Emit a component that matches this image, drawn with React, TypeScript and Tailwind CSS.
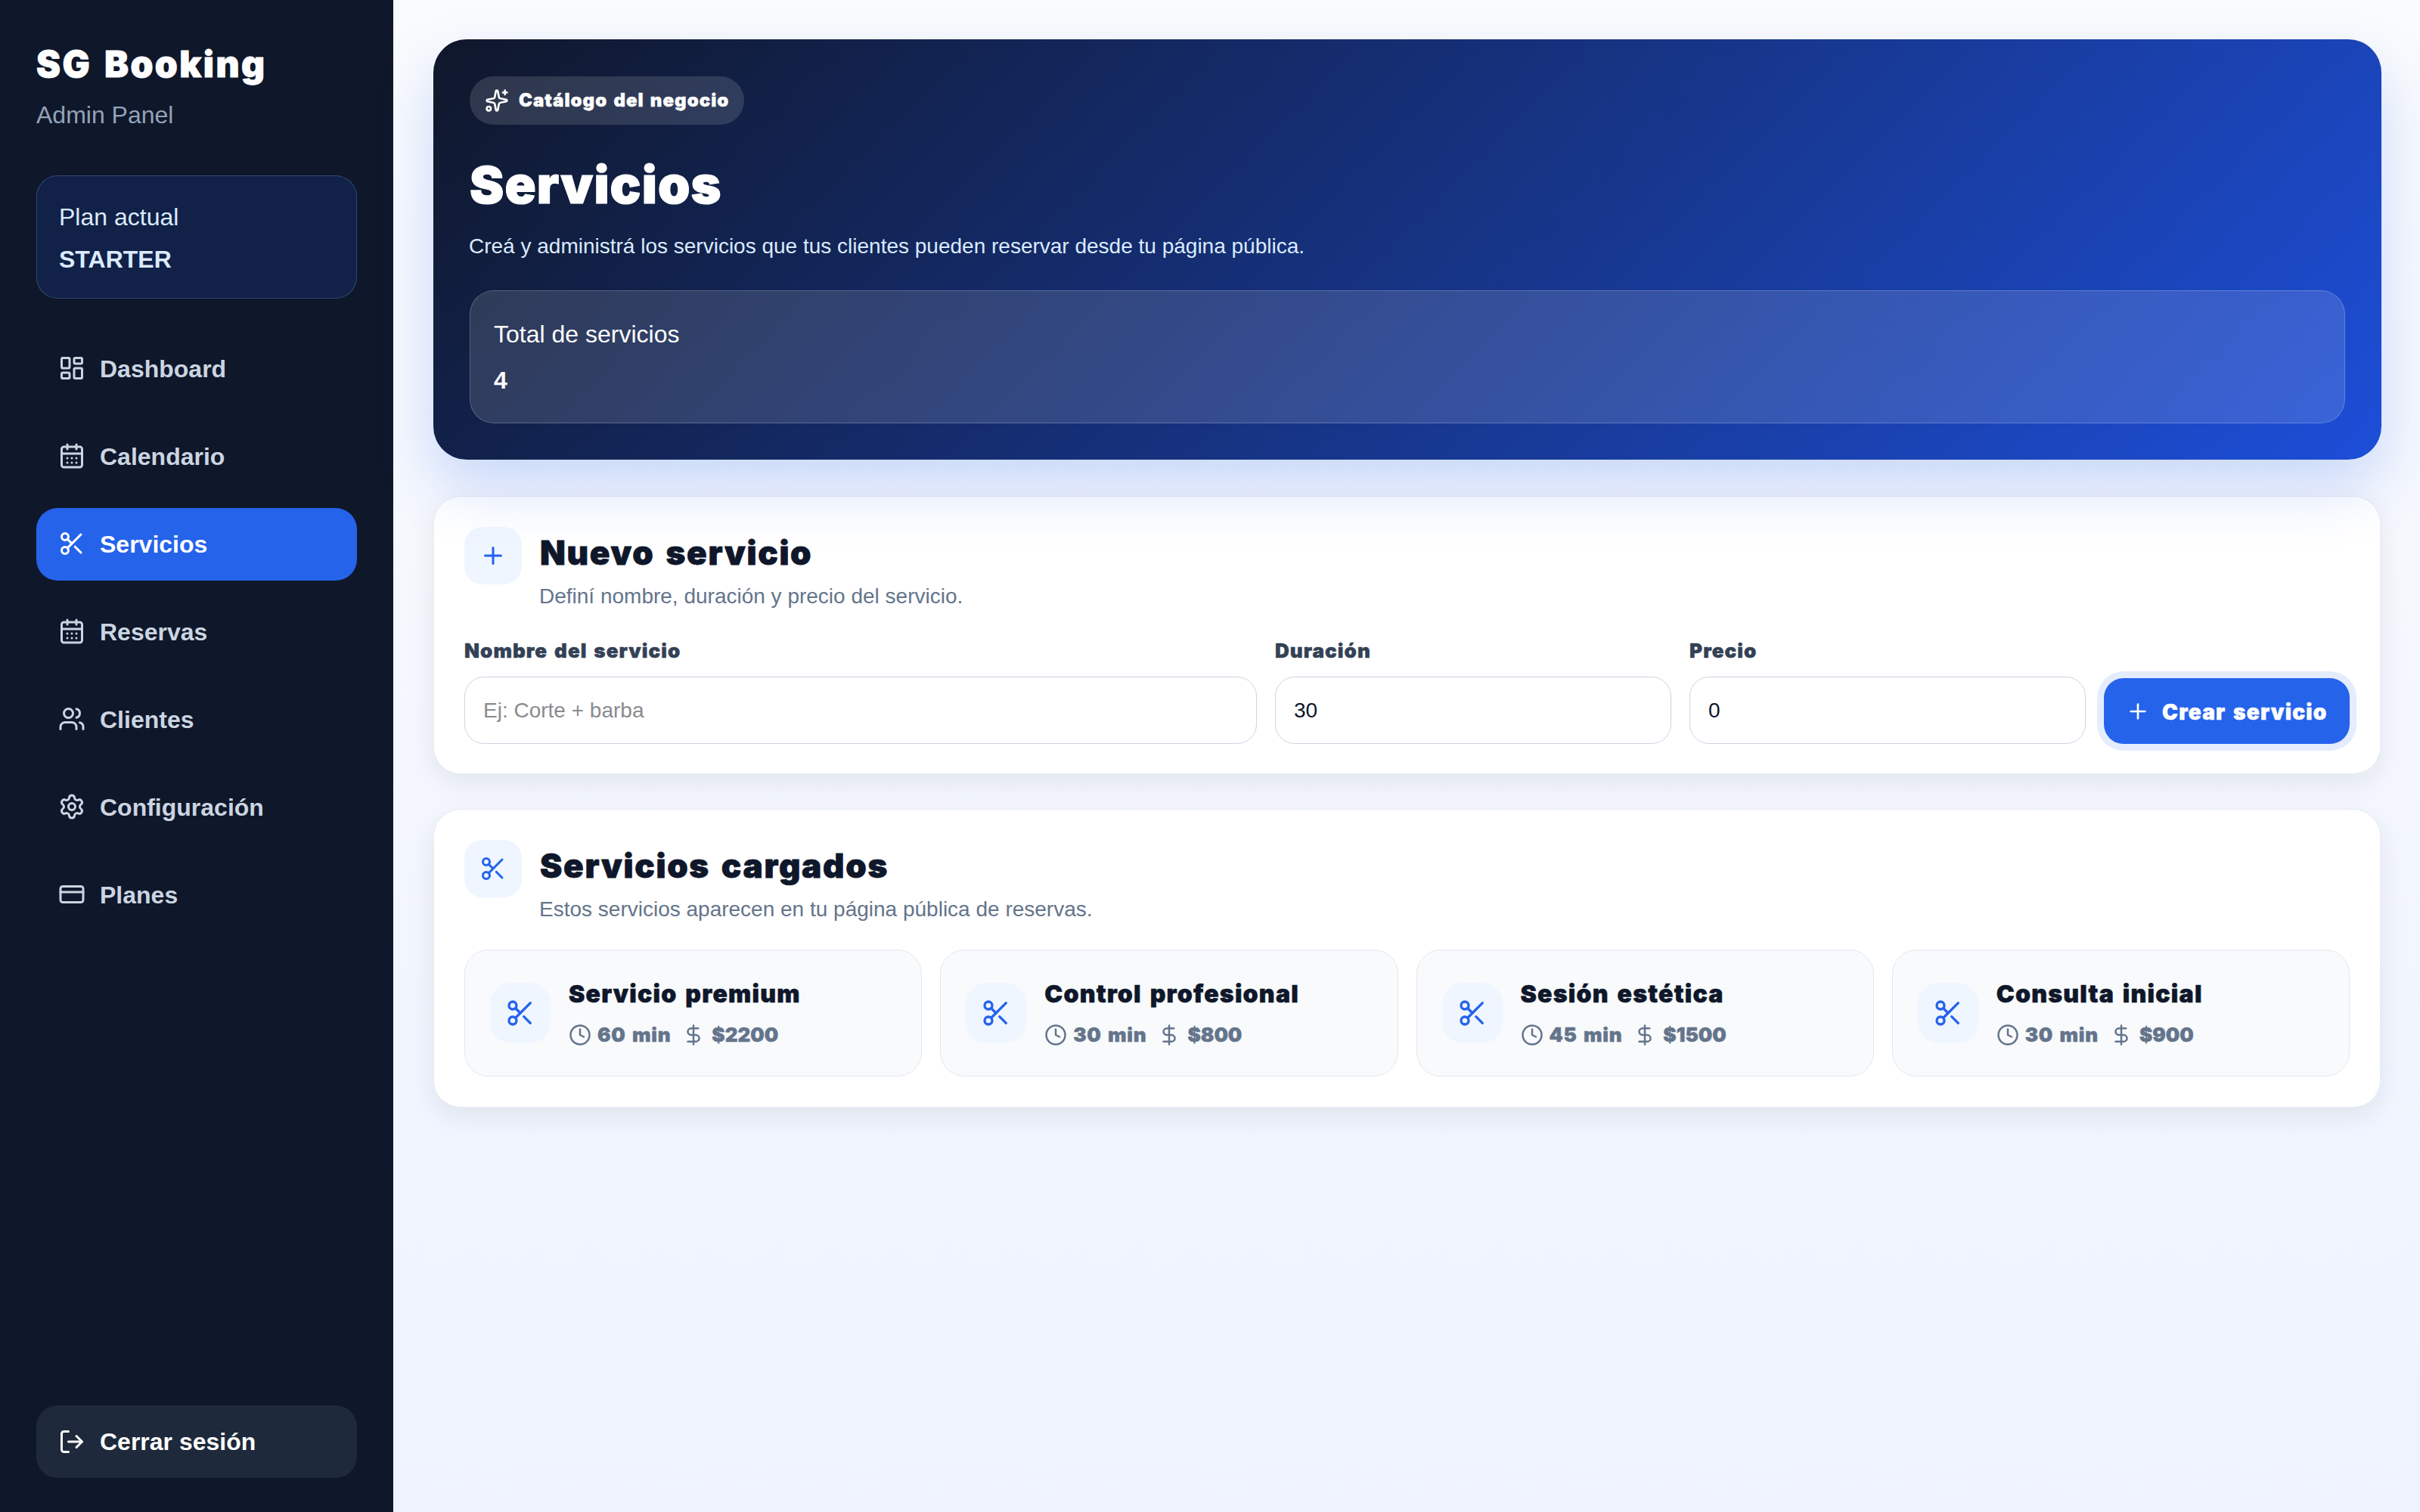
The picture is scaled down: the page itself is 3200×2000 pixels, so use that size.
import type { ReactNode } from "react";
import {
  CalendarDays,
  Clock,
  CreditCard,
  DollarSign,
  LayoutDashboard,
  LogOut,
  Plus,
  Scissors,
  Settings,
  Sparkles,
  Users,
  type LucideIcon,
} from "lucide-react";

const navItems: { label: string; icon: LucideIcon; active?: boolean }[] = [
  { label: "Dashboard", icon: LayoutDashboard },
  { label: "Calendario", icon: CalendarDays },
  { label: "Servicios", icon: Scissors, active: true },
  { label: "Reservas", icon: CalendarDays },
  { label: "Clientes", icon: Users },
  { label: "Configuración", icon: Settings },
  { label: "Planes", icon: CreditCard },
];

const services = [
  { name: "Servicio premium", minutes: 60, price: 2200 },
  { name: "Control profesional", minutes: 30, price: 800 },
  { name: "Sesión estética", minutes: 45, price: 1500 },
  { name: "Consulta inicial", minutes: 30, price: 900 },
];

const black = "font-['Inter'] font-black [word-spacing:0.1em] [-webkit-text-stroke:0.018em_currentColor]";

function Sidebar() {
  return (
    <aside className="flex w-[520px] shrink-0 flex-col bg-[#0f172a] px-12 pt-14 pb-[45px]">
      <h2 className={`${black} whitespace-nowrap text-[48px] leading-[58px] tracking-[0.051em] text-white`}>
        SG Booking
      </h2>
      <p className="mt-[18px] text-[32px] leading-10 text-[#94a3b8]">Admin Panel</p>

      <div className="mt-[60px] h-[163px] rounded-[28px] border border-[#93c5fd]/25 bg-[#112147] px-[29px] pt-[34px] text-[32px] leading-10 text-[#dbeafe]">
        <p>Plan actual</p>
        <p className="mt-4 font-bold">STARTER</p>
      </div>

      <nav className="mt-[45px] flex flex-col gap-5">
        {navItems.map(({ label, icon: Icon, active }) => (
          <a
            key={label}
            className={`flex h-24 items-center gap-[19px] rounded-[28px] pl-[29px] text-[32px] font-bold ${
              active ? "bg-[#2563eb] text-white" : "text-[#cbd5e1]"
            }`}
          >
            <Icon className="mb-0.5 size-9 shrink-0" />
            {label}
          </a>
        ))}
      </nav>

      <button
        type="button"
        className="mt-auto flex h-24 items-center gap-[19px] rounded-[28px] bg-[#1e293b] pl-[29px] text-[32px] font-bold text-white"
      >
        <LogOut className="size-9 shrink-0" />
        Cerrar sesión
      </button>
    </aside>
  );
}

function Hero() {
  return (
    <section className="relative h-[556px] rounded-[44px] bg-[linear-gradient(135deg,#0f172a,#1d4ed8)] px-12 pt-[49px] shadow-[0_36px_80px_rgba(37,99,235,0.22)]">
      <div className="flex h-16 w-[363px] items-center gap-[13px] rounded-full bg-white/13 pl-5 text-white">
        <Sparkles className="size-8 shrink-0" />
        <span className={`${black} whitespace-nowrap text-[24px] tracking-[0.043em]`}>Catálogo del negocio</span>
      </div>
      <h1 className={`${black} mt-[37px] text-[68px] leading-[84px] tracking-[0.016em] text-white`}>Servicios</h1>
      <p className="mt-5 -ml-px text-[28px] leading-10 text-[#dbeafe]">
        Creá y administrá los servicios que tus clientes pueden reservar desde tu página pública.
      </p>
      <div className="mt-[38px] h-44 rounded-[32px] border border-white/20 bg-white/13 px-[31px] pt-[37px] text-[32px] leading-10 text-white">
        <p>Total de servicios</p>
        <p className="mt-[21px] font-bold">4</p>
      </div>
    </section>
  );
}

function Panel({ className, icon: Icon, title, subtitle, children }: {
  className: string;
  icon: LucideIcon;
  title: string;
  subtitle: string;
  children: ReactNode;
}) {
  return (
    <section
      className={`${className} mr-px rounded-[36px] border border-[#e2e8f0]/80 bg-white px-10 pt-10 shadow-[0_12px_36px_rgba(15,23,42,0.08)]`}
    >
      <div className="flex gap-6">
        <div className="flex size-[76px] shrink-0 items-center justify-center rounded-3xl bg-[#eff6ff] text-[#2563eb]">
          <Icon className="size-9" />
        </div>
        <div>
          <h2 className={`${black} text-[44px] leading-[68px] tracking-[0.039em] text-[#0f172a]`}>{title}</h2>
          <p className="mt-1 -ml-px text-[28px] leading-10 text-[#64748b]">{subtitle}</p>
        </div>
      </div>
      {children}
    </section>
  );
}

function Field({ label, value, placeholder }: { label: string; value?: string; placeholder?: string }) {
  return (
    <label className="flex min-w-0 flex-col gap-[18px]">
      <span className={`${black} text-[26px] leading-8 tracking-[0.041em] text-[#334155]`}>{label}</span>
      <input
        className="h-[89px] w-full rounded-[26px] border border-[#cbd5e1] bg-white px-6 text-[28px] text-[#0f172a] placeholder:text-[#8a8b8f]"
        defaultValue={value}
        placeholder={placeholder}
      />
    </label>
  );
}

function ServiceCard({ name, minutes, price }: { name: string; minutes: number; price: number }) {
  return (
    <article className="flex h-[168px] items-center gap-6 rounded-[32px] border border-[#e2e8f0] bg-[#f8fafc] px-[33px]">
      <div className="flex size-20 shrink-0 items-center justify-center rounded-[28px] bg-[#eff6ff] text-[#2563eb]">
        <Scissors className="size-10" />
      </div>
      <div>
        <h3 className={`${black} whitespace-nowrap text-[32px] leading-10 tracking-[0.039em] text-[#0f172a]`}>
          {name}
        </h3>
        <div className={`${black} mt-[18px] flex items-center whitespace-nowrap text-[26px] leading-8 text-[#64748b]`}>
          <Clock className="mr-2 size-[30px]" />
          <span className="tracking-[0.028em]">{minutes} min</span>
          <DollarSign className="mr-[9px] ml-[15px] size-[30px]" />
          ${price}
        </div>
      </div>
    </article>
  );
}

export default function App() {
  return (
    <div className="flex h-[2000px] w-[3200px] overflow-hidden bg-[linear-gradient(180deg,#fafbfd,#eef3ff)] font-['Liberation_Sans',Arial,sans-serif]">
      <Sidebar />
      <main className="flex min-w-0 flex-1 flex-col pt-[52px] pr-[51px] pl-[53px]">
        <Hero />

        <Panel
          className="mt-12 h-[368px]"
          icon={Plus}
          title="Nuevo servicio"
          subtitle="Definí nombre, duración y precio del servicio."
        >
          <form className="mt-[36px] grid grid-cols-[2fr_1fr_1fr_325px] gap-6">
            <Field label="Nombre del servicio" placeholder="Ej: Corte + barba" />
            <Field label="Duración" value="30" />
            <Field label="Precio" value="0" />
            <button
              type="button"
              className="flex h-[87px] items-center gap-4 self-end rounded-[26px] bg-[#2563eb] pl-[29px] text-white shadow-[0_0_0_9px_rgba(37,99,235,0.12)]"
            >
              <Plus className="size-8 shrink-0" />
              <span className={`${black} mt-0.5 whitespace-nowrap text-[28px] tracking-[0.044em]`}>Crear servicio</span>
            </button>
          </form>
        </Panel>

        <Panel
          className="mt-[46px] h-[395px]"
          icon={Scissors}
          title="Servicios cargados"
          subtitle="Estos servicios aparecen en tu página pública de reservas."
        >
          <div className="mt-[33px] grid grid-cols-4 gap-6">
            {services.map((service) => (
              <ServiceCard key={service.name} {...service} />
            ))}
          </div>
        </Panel>
      </main>
    </div>
  );
}
